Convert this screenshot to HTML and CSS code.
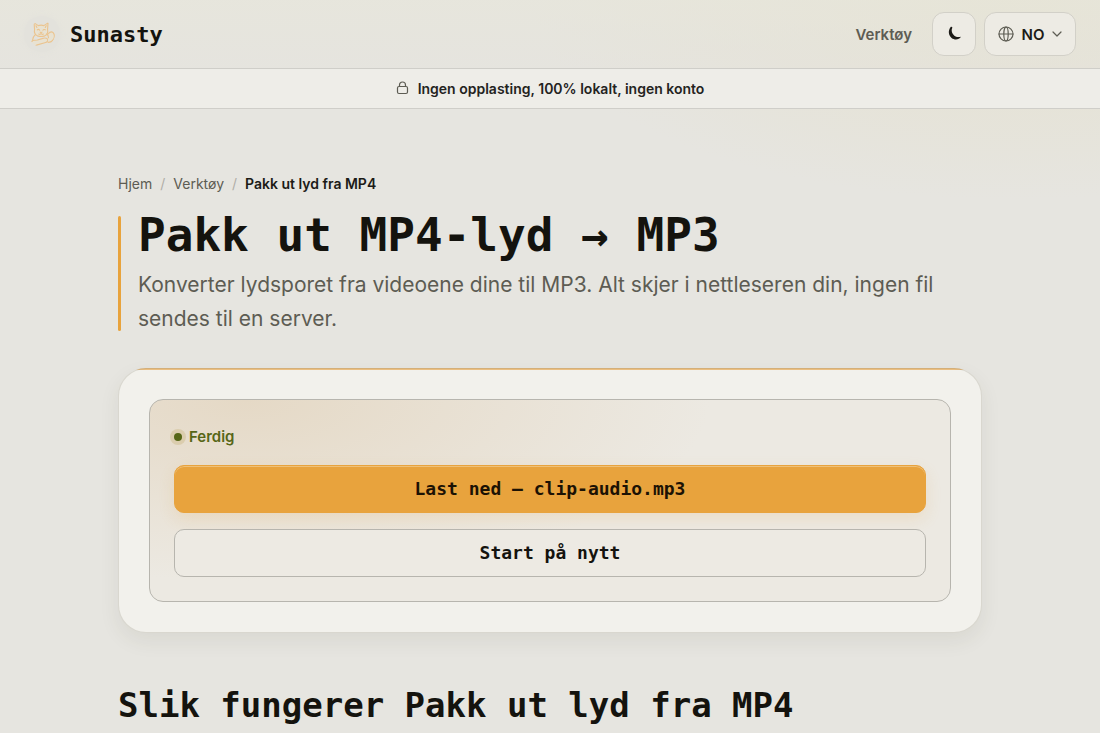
FILE: index.html
```html
<!DOCTYPE html>
<html lang="no">
<head>
    <meta charset="UTF-8">
    <meta name="viewport" content="width=device-width, initial-scale=1.0">
    <title>Pakk ut lyd fra MP4 | Sunasty</title>
    <link rel="stylesheet" href="styles.css">
</head>
<body>
    <header class="header">
        <a class="brand" href="#">
            <svg class="logo" viewBox="0 0 28 28" aria-hidden="true">
                <path d="M6 9 5.500 2l4.500 3q3-1 6 0l4.500-3L20 9q1 5-3 7-4 1.500-8 0-4-2-3-7z"/>
                <path d="M7.500 5l1 2M18.500 5l-1 2M9 9.500q1.500-1 2.500.5M15 10q1-1.500 2.500-.5M12 12l1 1 1-1M10.500 14q1.500 1 2.500-.5 1 1.500 2.500.5"/>
                <path d="M6.500 15q-3 3-2.500 6-3 2.500-1 5 2 1.500 5 0l9-2.500q4-1 3-4-2-2-6-.5l-5 1.500q-3 .5-5 .5"/>
                <path d="M19 14q2 1 2 4M20.500 14q3-3.500 5.500-1.500 2.500 3 .5 7-2 3.500-6 3.500"/>
            </svg>
            <span>Sunasty</span>
        </a>
        <nav class="nav">
            <a class="nav-link" href="#">Verktøy</a>
            <button class="nav-btn theme" type="button" aria-label="Mørk modus">
                <svg width="16" height="16" viewBox="0 0 16 16" aria-hidden="true">
                    <path class="moon" d="M4.500 1.300C2 4.500 2.300 9.300 5.600 11.900c3.200 2.400 7.400 1.800 9.400-1.200-3 .9-5.900.2-7.700-2.200C5.500 6.300 5.200 3.800 6.400 1.400 5.900.7 5 .7 4.500 1.300z"/>
                </svg>
            </button>
            <button class="nav-btn lang" type="button">
                <svg class="line" width="16" height="16" viewBox="0 0 16 16" aria-hidden="true">
                    <circle cx="8" cy="8" r="7"/>
                    <ellipse cx="8" cy="8" rx="2.200" ry="7"/>
                    <path d="M1 8h14"/>
                </svg>
                <span>NO</span>
                <svg class="line" width="10" height="10" viewBox="0 0 10 10" aria-hidden="true">
                    <path d="M1 3l4 4 4-4"/>
                </svg>
            </button>
        </nav>
    </header>

    <div class="notice">
        <svg class="line" width="13" height="14" viewBox="0 0 13 14" aria-hidden="true">
            <rect x="1.500" y="5.500" width="10" height="7" rx="1.500"/>
            <path d="M3.500 5.500V4a3 3 0 0 1 6 0v1.500"/>
        </svg>
        <span>Ingen opplasting, 100% lokalt, ingen konto</span>
    </div>

    <main class="wrap">
        <nav class="crumbs">
            <a href="#">Hjem</a>
            <span class="sep">/</span>
            <a href="#">Verktøy</a>
            <span class="sep">/</span>
            <span class="current">Pakk ut lyd fra MP4</span>
        </nav>

        <div class="hero">
            <div class="hero-bar"></div>
            <div class="hero-text">
                <h1>Pakk ut MP4-lyd → MP3</h1>
                <p>Konverter lydsporet fra videoene dine til MP3. Alt skjer i nettleseren din, ingen fil sendes til en server.</p>
            </div>
        </div>

        <section class="card">
            <div class="result">
                <p class="status"><span class="dot"></span>Ferdig</p>
                <button class="btn btn-main" type="button">Last ned — clip-audio.mp3</button>
                <button class="btn btn-plain" type="button">Start på nytt</button>
            </div>
        </section>

        <h2>Slik fungerer Pakk ut lyd fra MP4</h2>
    </main>
</body>
</html>
```

FILE: styles.css
```css
*{
    box-sizing: border-box;
}

body{
    margin: 0;
    font-family: Inter, "Liberation Sans", sans-serif;
    color: #14130e;
    background: radial-gradient(ellipse 480px 200px at 92% 0, #e5e1cf, rgba(229, 225, 207, 0)) no-repeat #e6e5e0;
}

a{
    color: inherit;
    text-decoration: none;
}

.header{
    display: flex;
    justify-content: space-between;
    align-items: center;
    height: 69px;
    padding: 0 24px;
    border-bottom: 1px solid #cfcec9;
    background: linear-gradient(rgba(231, 230, 219, 0.7), rgba(229, 227, 221, 0.5));
}

.brand{
    display: flex;
    align-items: center;
    gap: 10px;
    font-family: "DejaVu Sans Mono", monospace;
    font-size: 22px;
    font-weight: bold;
}

.logo{
    width: 36px;
    height: 36px;
    padding: 5px;
    fill: #e8e2d2;
    stroke: #ebc48f;
    stroke-width: 1.2;
    stroke-linejoin: round;
    stroke-linecap: round;
    border-radius: 50%;
    background: #e3e2dc;
    box-shadow: 0 0 6px #e3e2dc;
}

.nav{
    display: flex;
    align-items: center;
    gap: 8px;
}

.nav-link{
    margin-right: 12px;
    font-size: 15px;
    font-weight: 600;
    color: #5d5c53;
}

.nav-btn{
    display: flex;
    align-items: center;
    justify-content: center;
    height: 44px;
    border: 1px solid #d2d0c8;
    border-radius: 12px;
    background: #edebe4;
    color: #1c1b17;
    font-family: inherit;
    font-size: 15px;
    font-weight: 600;
}

.theme{
    width: 44px;
}

.lang{
    width: 92px;
    gap: 8px;
}

.moon{
    fill: #1c1b17;
}

.line{
    fill: none;
    stroke: #5d5c53;
    stroke-width: 1.2;
    stroke-linecap: round;
    stroke-linejoin: round;
}

.notice{
    display: flex;
    align-items: center;
    justify-content: center;
    gap: 9px;
    height: 40px;
    padding-bottom: 1px;
    border-bottom: 1px solid #cfcec9;
    background: #eeede8;
    font-size: 14px;
    font-weight: 600;
    color: #24231e;
}

.wrap{
    max-width: 960px;
    margin: 0 auto;
    padding: 64px 48px;
}

.crumbs{
    display: flex;
    gap: 8px;
    font-size: 14px;
    line-height: 22px;
    color: #5d5c53;
}

.sep{
    color: #b0aea7;
}

.current{
    font-weight: 600;
    color: #1c1b17;
}

/* title */
.hero{
    display: flex;
    gap: 17px;
    margin-top: 16px;
}

.hero-bar{
    width: 3px;
    margin: 5px 0;
    border-radius: 2px;
    background: #e8a33d;
}

.hero-text{
    flex: 1;
}

h1, h2{
    margin: 0;
    font-family: "DejaVu Sans Mono", monospace;
    font-weight: bold;
}

h1{
    font-size: 46px;
    line-height: 48px;
}

.hero p{
    margin: 9px 0 0;
    font-size: 21px;
    line-height: 34px;
    color: #5d5c53;
}

h2{
    margin-top: 50px;
    font-size: 34px;
    line-height: 44px;
}

/* result card */
.card{
    margin-top: 32px;
    padding: 30px;
    border: 1px solid rgba(120, 115, 95, 0.2);
    border-radius: 28px;
    background: linear-gradient(#ebbe80, #ebbe80) 0 0 / 100% 2px no-repeat border-box, #f2f1ec;
    box-shadow: 0 8px 20px rgba(70, 65, 40, 0.08);
}

.result{
    display: flex;
    flex-direction: column;
    gap: 16px;
    padding: 24px;
    border: 1px solid #b7b5ae;
    border-radius: 14px;
    background: radial-gradient(ellipse 58% 90% at 12% 0, #e5d9c6, rgba(232, 224, 210, 0)) #ece9e2;
}

.status{
    display: flex;
    align-items: center;
    gap: 7px;
    margin: 0;
    font-size: 15px;
    font-weight: 600;
    line-height: 25px;
    color: #566616;
}

.dot{
    width: 8px;
    height: 8px;
    border-radius: 50%;
    background: #566616;
    box-shadow: 0 0 0 4px #dbcdae;
}

.btn{
    height: 48px;
    padding: 0 16px 2px;
    border: 1px solid #b7b5ae;
    border-radius: 10px;
    font-family: "DejaVu Sans Mono", monospace;
    font-size: 18px;
    font-weight: bold;
    color: #14130e;
    background: #edeae3;
}

.btn-main{
    border-color: #e8a33d;
    background: #e8a33d;
    box-shadow: inset 0 1px 0 #efc078, 0 6px 16px rgba(232, 163, 61, 0.16);
    color: #1c1204;
}
```
